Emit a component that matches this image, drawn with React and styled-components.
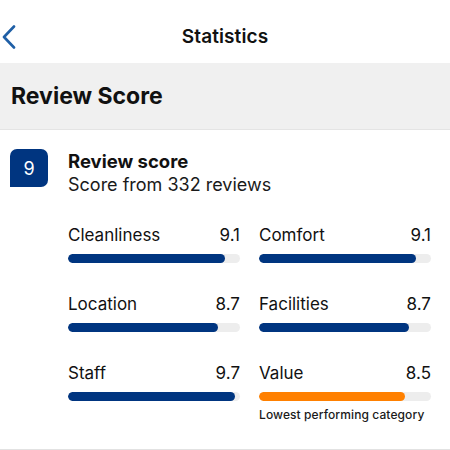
import React from 'react';
import styled, { createGlobalStyle } from 'styled-components';

const GlobalStyle = createGlobalStyle`
  * { box-sizing: border-box; }
  body {
    margin: 0;
    background: #fff;
    font-family: Inter, "Liberation Sans", Arial, sans-serif;
    color: #1a1a1a;
  }
`;

const categories = [
  { name: 'Cleanliness', score: 9.1 },
  { name: 'Comfort', score: 9.1 },
  { name: 'Location', score: 8.7 },
  { name: 'Facilities', score: 8.7 },
  { name: 'Staff', score: 9.7 },
  { name: 'Value', score: 8.5, lowest: true },
];

const App = () => {
  return (
    <Page>
      <GlobalStyle />
      <NavBar>
        <BackButton aria-label="Back">
          <svg width="14" height="24" viewBox="0 0 14 24" fill="none">
            <path d="M12 1.5 L2 12 L12 22.5" stroke="#1f5fa6" strokeWidth="2.6" strokeLinecap="round" strokeLinejoin="round" />
          </svg>
        </BackButton>
        <NavTitle>Statistics</NavTitle>
      </NavBar>

      <SectionHeader>Review Score</SectionHeader>

      <Summary>
        <ScoreBadge>9</ScoreBadge>
        <SummaryText>
          <SummaryTitle>Review score</SummaryTitle>
          <SummarySub>Score from 332 reviews</SummarySub>
        </SummaryText>
      </Summary>

      <Grid>
        {categories.map((c) => (
          <Category key={c.name}>
            <CategoryHead>
              <span>{c.name}</span>
              <span>{c.score.toFixed(1)}</span>
            </CategoryHead>
            <Track>
              <Fill $lowest={c.lowest} style={{ width: `${c.score * 10}%` }} />
            </Track>
            {c.lowest && <Note>Lowest performing category</Note>}
          </Category>
        ))}
      </Grid>
    </Page>
  );
};

const Page = styled.div`
  width: 450px;
  height: 450px;
  overflow: hidden;
  border-bottom: 1px solid #e2e2e2;
`;

const NavBar = styled.div`
  position: relative;
  height: 63px;
  padding-top: 9px;
  display: flex;
  align-items: center;
  justify-content: center;
`;

const BackButton = styled.div`
  position: absolute;
  left: 2px;
  top: 25px;
  display: flex;
`;

const NavTitle = styled.h1`
  margin: 0;
  font-size: 19px;
  font-weight: 600;
  letter-spacing: 0.1px;
  color: #111;
`;

const SectionHeader = styled.h2`
  margin: 0;
  height: 67px;
  padding: 0 11px;
  display: flex;
  align-items: center;
  background: #f0f0f0;
  border-bottom: 1px solid #e4e4e4;
  font-size: 23px;
  font-weight: 700;
  color: #111;
`;

const Summary = styled.div`
  display: flex;
  gap: 20px;
  padding: 19px 10px 0;
`;

const ScoreBadge = styled.div`
  width: 38px;
  height: 38px;
  flex-shrink: 0;
  display: flex;
  align-items: center;
  justify-content: center;
  background: #003580;
  color: #fff;
  font-size: 18px;
  border-radius: 7px 7px 7px 0;
`;

const SummaryText = styled.div`
  display: flex;
  flex-direction: column;
  padding-top: 1px;
`;

const SummaryTitle = styled.div`
  font-size: 18.5px;
  font-weight: 700;
  line-height: 23px;
  color: #111;
`;

const SummarySub = styled.div`
  font-size: 18px;
  line-height: 23px;
  color: #1a1a1a;
`;

const Grid = styled.div`
  display: grid;
  grid-template-columns: 172px 172px;
  align-items: start;
  column-gap: 19px;
  row-gap: 30px;
  padding: 28px 0 0 68px;
`;

const Category = styled.div`
  display: flex;
  flex-direction: column;
`;

const CategoryHead = styled.div`
  display: flex;
  justify-content: space-between;
  font-size: 17px;
  line-height: 22px;
  color: #111;
`;

const Track = styled.div`
  flex-shrink: 0;
  margin-top: 8px;
  height: 9px;
  border-radius: 5px;
  background: #ededed;
  overflow: hidden;
`;

const Fill = styled.div`
  height: 100%;
  border-radius: 5px;
  background: ${({ $lowest }) => ($lowest ? '#ff8000' : '#003580')};
`;

const Note = styled.div`
  margin-top: 6px;
  font-size: 12px;
  font-weight: 500;
  letter-spacing: 0.1px;
  color: #1a1a1a;
  white-space: nowrap;
`;

export default App;
